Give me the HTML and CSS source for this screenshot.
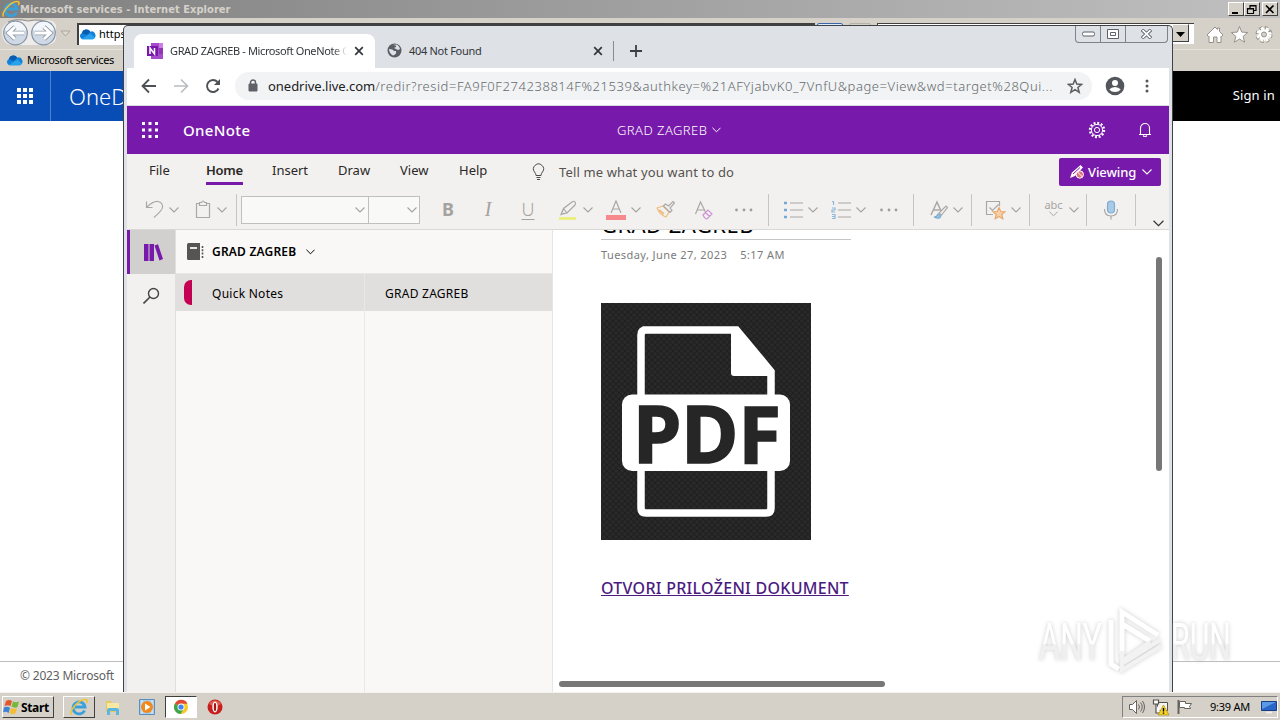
FILE: index.html
```html
<!DOCTYPE html>
<html lang="en">
<head>
    <meta charset="UTF-8">
    <meta name="viewport" content="width=device-width, initial-scale=1.0">
    <title>GRAD ZAGREB - Microsoft OneNote Online</title>
    <link rel="stylesheet" href="styles.css">
</head>
<body>
    <!-- shared icons -->
    <svg class="defs" width="0" height="0">
        <symbol id="chev" viewBox="0 0 10 6"><path d="M.5.5 5 5 9.5.5" fill="none" stroke="currentColor" stroke-width="1.1"/></symbol>
        <symbol id="cloud" viewBox="0 0 18 12"><path d="M3.500 11.500a3.500 3.500 0 0 1-.5-6.500A5 5 0 0 1 12 3.500a4 4 0 0 1 2.500 8z" fill="#1282d8"/><path d="M3 5A5 5 0 0 1 12 3.500L8 7z" fill="#0a5cb0"/><path d="M3 11.200 12 5.500l5 4.500-2 1.500H4z" fill="#27a3ee"/></symbol>
        <symbol id="waffle" viewBox="0 0 16 16"><path d="M0 0h4v4H0zM6 0h4v4H6zM12 0h4v4h-4zM0 6h4v4H0zM6 6h4v4H6zM12 6h4v4h-4zM0 12h4v4H0zM6 12h4v4H6zM12 12h4v4h-4z" fill="#fff"/></symbol>
        <symbol id="dots" viewBox="0 0 20 4"><circle cx="2.500" cy="2" r="1.400"/><circle cx="10" cy="2" r="1.400"/><circle cx="17" cy="2" r="1.400"/></symbol>
        <symbol id="cross" viewBox="0 0 10 10"><path d="m1.200 1.200 7.600 7.600m0-7.600L1.200 8.800" fill="none" stroke="#33363a" stroke-width="1.700"/></symbol>
        <symbol id="ie" viewBox="0 0 18 18"><path d="M14.500 12.500A6 6 0 1 1 15 9H5" fill="none" stroke="#3aa0dc" stroke-width="2.800"/><path d="M1.500 16.500C-1 13 8 1.500 15.500 1.500c2 0 2 2 .8 3.500" fill="none" stroke="#f0c52c" stroke-width="1.500"/></symbol>
    </svg>

    <div class="desktop">
        <div class="ie">
            <div class="ie-title">
                <svg class="ie-logo" width="18" height="18"><use href="#ie"/></svg>
                <span class="ie-name">Microsoft services - Internet Explorer</span>
                <div class="win-btns">
                    <span class="win-btn"><svg width="12" height="11"><path d="M2 9h6" stroke="#000" stroke-width="2"/></svg></span>
                    <span class="win-btn"><svg width="12" height="11"><path d="M4 4V1.500h6v5H8M1.500 4.500h6v5h-6zM1 5h7M4 2h6" fill="none" stroke="#000" stroke-width="1.200"/></svg></span>
                    <span class="win-btn last"><svg width="12" height="11"><path d="m2 1.500 7.500 7.500m0-7.500L2 9" stroke="#000" stroke-width="1.700"/></svg></span>
                </div>
            </div>
            <div class="ie-nav">
                <svg class="ie-arrows" width="75" height="30" viewBox="0 0 75 30">
                    <path d="M14 2h32q8 0 10 5v14q-2 6-10 6H14Q3 27 2 16T14 2z" fill="#eeecea"/>
                    <path d="M8 4Q16 0 28 3q14-3 24 3" fill="none" stroke="#8d8983"/>
                    <g stroke="#8794a5" stroke-width="1.200" fill="#cfd9e6"><circle cx="15.500" cy="15" r="11.800"/><circle cx="43.500" cy="15" r="11.800"/></g>
                    <g fill="#f3f7fb"><path d="M5 12a10.800 10.800 0 0 1 21 0q-10 6-21 0zM33 12a10.800 10.800 0 0 1 21 0q-10 6-21 0z"/></g>
                    <path d="M24 15H9m6-6-6.500 6 6.500 6M35 15h15m-6-6 6.500 6-6.500 6" fill="none" stroke="#929dab" stroke-width="4.500"/>
                    <path d="M24 15H9m6-6-6.500 6 6.500 6M35 15h15m-6-6 6.500 6-6.500 6" fill="none" stroke="#fff" stroke-width="2.800"/>
                    <path d="M61 13h9l-4.500 5z" fill="#dedad2" stroke="#aaa69e"/>
                </svg>
                <div class="address">
                    <svg width="17" height="12"><use href="#cloud"/></svg>
                    <span>https://onedrive.live.com</span>
                </div>
                <span class="nav-chip blue"></span>
                <span class="nav-chip"></span>
                <div class="ie-search"><span class="drop"><svg width="9" height="5"><path d="M0 0h9L4.500 5z"/></svg></span></div>
                <svg class="ie-tools" width="70" height="20" viewBox="0 0 70 20" fill="#fff" stroke="#96928b">
                    <path d="m2 10 8-8 2.500 2.500V3h2v3.500L18 10l-1.500 1.500-.5-.5v6.500h-4V12H8.500v5.500H4V11l-.5.500z"/>
                    <path d="m34.500 1.500 2.200 5.600 6 .4-4.600 3.900 1.500 5.800-5.100-3.200-5.100 3.200 1.500-5.800-4.600-3.900 6-.4z"/>
                    <g transform="translate(59 9.500)"><circle r="6.500" stroke="#96928b" stroke-width="4" stroke-dasharray="2.900 2.200"/><circle r="6.300" fill="none" stroke="#fff" stroke-width="2.600" stroke-dasharray="2.500 2.600" stroke-dashoffset="-.2"/><circle r="5.200" stroke="none"/><circle r="2.500" fill="#d5d0c8"/></g>
                </svg>
            </div>
            <div class="ie-fav">
                <svg width="17" height="12"><use href="#cloud"/></svg>
                <span>Microsoft services</span>
            </div>
            <div class="site-head">
                <div class="site-waffle"><svg width="16" height="16"><use href="#waffle"/></svg></div>
                <div class="site-name">OneDrive</div>
                <div class="site-sign"><span>Sign in</span></div>
            </div>
            <div class="site-body"></div>
            <div class="site-foot"><span>© 2023 Microsoft</span></div>
        </div>

        <div class="taskbar">
            <div class="start">
                <svg width="17" height="16" viewBox="0 0 17 16"><path d="M3 2q3-2 6 0L7.500 7q-3-1.500-6 0z" fill="#e4552a"/><path d="M10 2.500q3 1.500 6 0L14.500 8q-3 1.500-6-.5z" fill="#76b83a"/><path d="M1 8.500q3-1.500 6 .2L5.600 14q-3-2-5.600-.5z" fill="#3d82d4"/><path d="M8 9q3 1.500 6 .2l-1.500 5q-3 1.500-6-.2z" fill="#f5bd32"/></svg>
                <span>Start</span>
            </div>
            <div class="task raised"><svg width="18" height="18"><use href="#ie"/></svg></div>
            <div class="task">
                <svg width="18" height="18" viewBox="0 0 18 18"><path d="M2 3h5l1 2h7v9H2z" fill="#e8c860"/><path d="M3 5h12v8H3z" fill="#f8e8a2"/><path d="M3 17v-5q0-2 2-2h8q2 0 2 2v5h-3v-4H6v4z" fill="#5cb6df"/></svg>
            </div>
            <div class="task">
                <svg width="18" height="18" viewBox="0 0 18 18"><path d="M1.500 1.500h15v15h-15z" fill="#a9cdea" stroke="#5790be"/><path d="M4 2v14M14 2v14" stroke="#e3f1fa"/><circle cx="9" cy="9" r="6" fill="#f18a1c"/><path d="m7 5.500 5.500 3.500L7 12.500z" fill="#fff"/></svg>
            </div>
            <div class="task active">
                <svg width="16" height="16" viewBox="-8 -8 16 16"><circle r="7" fill="#f6c928"/><path d="M0 0-6.100-3.500A7 7 0 0 1 6.500-3.200H0z" fill="#df4935"/><path d="M0 0-6.100-3.500A7 7 0 0 0-.5 7L3 1.500z" fill="#3fa450"/><circle r="3.500" fill="#fff"/><circle r="2.600" fill="#4284ec"/></svg>
            </div>
            <div class="task">
                <svg width="16" height="16" viewBox="0 0 16 16"><circle cx="8" cy="8" r="7.500" fill="#c81e1e"/><path d="M2 5a7 7 0 0 1 12 0q-6 4-12 0z" fill="#e35c50"/><ellipse cx="8" cy="8" rx="2.700" ry="5.400" fill="#fff"/><ellipse cx="8" cy="8" rx="1.200" ry="4.200" fill="#a81313"/></svg>
            </div>
            <div class="tray">
                <svg width="18" height="16" viewBox="0 0 18 16" fill="none" stroke="#66635e"><path d="M1.500 5.500h3l4-4v13l-4-4h-3z" fill="#fff"/><path d="M10.500 5.500q2 2.500 0 5M12.500 3.500q3.500 4.500 0 9M14.500 2q4 6 0 12"/></svg>
                <svg width="18" height="17" viewBox="0 0 18 17"><path d="M5.500 3.500h10v8h-10z" fill="#f6f4ef" stroke="#55524d"/><path d="M1.500 1v4h5V1zM4 5v9h5" fill="#fff" stroke="#55524d" stroke-width="1.200"/><path d="m11.500 6 5.500 10H6z" fill="#f9d321" stroke="#9b800a" stroke-width=".6"/><path d="M11.500 9v3.500m0 1v1.200" stroke="#000" stroke-width="1.400"/></svg>
                <svg width="18" height="16" viewBox="0 0 18 16"><path d="M2.500 1v14" stroke="#66635e" stroke-width="2"/><path d="M3.500 2.500h6v2h6l-2 3 1 2h-6v-1h-5z" fill="#fff" stroke="#66635e"/></svg>
                <span class="clock">9:39 AM</span>
                <svg width="16" height="14" viewBox="0 0 16 14"><path d="M.5 1.500h15v9H.5z" fill="#2a66c8" stroke="#173f86"/><path d="M1 2h14L1 9z" fill="#5c99e7"/><path d="M5 12.500h6" stroke="#eee" stroke-width="2"/></svg>
            </div>
        </div>
    </div>

    <div class="chrome">
        <div class="tabs">
            <div class="tab tab-on">
                <svg width="16" height="16" viewBox="0 0 16 16"><path d="M4 0h12v16H4z" fill="#a74bcd"/><path d="M12 0h4v5h-4z" fill="#cb7ce5"/><path d="M12 5h4v6h-4z" fill="#9236b4"/><path d="M0 3h11v10H0z" fill="#7719aa"/><path d="M3 11V5l4.500 6V5" fill="none" stroke="#fff" stroke-width="1.500"/></svg>
                <span class="tab-text">GRAD ZAGREB - Microsoft OneNote Online</span>
                <svg width="10" height="10"><use href="#cross"/></svg>
            </div>
            <div class="tab tab-off">
                <svg width="15" height="15" viewBox="0 0 15 15"><circle cx="7.500" cy="7.500" r="7" fill="#5b5f65"/><path d="M2 6q4 0 5 2h2q1 3-3 4.500Q2 10 2 6zM6 2q4 0 3 2l-2 1 4 2 2-1q-1-4-4-4.500z" fill="#dee1e6"/></svg>
                <span class="tab-text">404 Not Found</span>
                <svg width="10" height="10"><use href="#cross"/></svg>
            </div>
            <span class="tab-line"></span>
            <svg class="plus" width="12" height="12"><path d="M6 0v12M0 6h12" stroke="#3c4043" stroke-width="1.800"/></svg>
            <div class="aero">
                <span><svg width="13" height="6"><rect x=".5" y="1" width="12" height="4" rx="1.500" fill="#fff" stroke="#5c6069"/></svg></span>
                <span><svg width="12" height="10"><path d="M.5.5h11v9H.5zM3.500 3.500h5v3h-5z" fill="#fff" stroke="#5c6069"/></svg></span>
                <span class="aero-x"><svg width="13" height="10"><path d="m2 .8 9 8.400m0-8.400L2 9.200" stroke="#5c6069" stroke-width="3.600"/><path d="m2.500 1.200 8 7.600m0-7.600-8 7.600" stroke="#fff" stroke-width="1.800"/></svg></span>
            </div>
        </div>

        <div class="toolbar">
            <svg width="16" height="16" viewBox="0 0 16 16"><path d="M15 8H2m6-6.500L1.500 8 8 14.500" fill="none" stroke="#4d5156" stroke-width="1.800"/></svg>
            <svg width="16" height="16" viewBox="0 0 16 16"><path d="M1 8h13M8 1.500 14.500 8 8 14.500" fill="none" stroke="#b9bcbf" stroke-width="1.600"/></svg>
            <svg width="16" height="16" viewBox="0 0 16 16"><path d="M13.500 10.500A6 6 0 1 1 12.500 4" fill="none" stroke="#4d5156" stroke-width="1.900"/><path d="M15 1v6H9z" fill="#4d5156"/></svg>
            <div class="omnibox">
                <svg width="10" height="13" viewBox="0 0 10 13"><path d="M1 5h8v7H1z" fill="#5f6368" stroke="#5f6368"/><path d="M2.500 5V3.500a2.500 2.500 0 0 1 5 0V5" fill="none" stroke="#5f6368" stroke-width="1.500"/></svg>
                <span class="url"><b>onedrive.live.com</b><i>/redir?resid=FA9F0F274238814F%21539&amp;authkey=%21AFYjabvK0_7VnfU&amp;page=View&amp;wd=target%28Qui...</i></span>
                <svg width="16" height="16" viewBox="0 0 16 16"><path d="m8 1.500 1.800 4.600 4.900.3-3.800 3.100 1.300 4.800L8 11.600l-4.200 2.700 1.300-4.800L1.300 6.400l4.900-.3z" fill="none" stroke="#5a5e63" stroke-width="1.500"/></svg>
            </div>
            <svg width="20" height="20" viewBox="0 0 20 20"><circle cx="10" cy="10" r="9.300" fill="#53575c"/><circle cx="10" cy="7" r="3" fill="#fff"/><path d="M4.300 13.500q2-2.500 5.700-2.500t5.700 2.500q-2 2.500-5.700 2.500t-5.700-2.500z" fill="#fff"/></svg>
            <svg class="kebab" width="4" height="16" viewBox="0 0 4 16" fill="#53575c"><circle cx="2" cy="3" r="1.500"/><circle cx="2" cy="8" r="1.500"/><circle cx="2" cy="13" r="1.500"/></svg>
        </div>

        <div class="page">
            <div class="suite">
                <svg width="16" height="16" viewBox="0 0 16 16" fill="#fff"><path d="M0 0h3v3H0zM6.500 0h3v3h-3zM13 0h3v3h-3zM0 6.500h3v3H0zM6.500 6.500h3v3h-3zM13 6.500h3v3h-3zM0 13h3v3H0zM6.500 13h3v3h-3zM13 13h3v3h-3z"/></svg>
                <span class="app">OneNote</span>
                <span class="doc">GRAD ZAGREB</span>
                <svg width="9" height="6"><use href="#chev"/></svg>
                <svg class="gear" width="18" height="18" viewBox="-9 -9 18 18" fill="none" stroke="#fff"><circle r="2.600"/><circle r="5.600"/><circle r="7" stroke-width="2.400" stroke-dasharray="1.900 1.770"/></svg>
                <svg width="14" height="16" viewBox="0 0 14 16" fill="none" stroke="#fff" stroke-width="1.100"><path d="M2.500 12.500V6a4.500 4.500 0 0 1 9 0v6.500H13H1zM5 13.500q2 2 4 0"/></svg>
            </div>

            <div class="menu">
                <span>File</span>
                <span class="on">Home</span>
                <span>Insert</span>
                <span>Draw</span>
                <span>View</span>
                <span>Help</span>
                <svg width="13" height="18" viewBox="0 0 13 18" fill="none" stroke="#4b4947"><path d="M4 12.500Q4 10.500 2.500 9a5 5 0 1 1 8 0Q9 10.500 9 12.500zM4.500 14.500h4M5 16.500h3"/></svg>
                <span class="tell">Tell me what you want to do</span>
                <div class="viewing">
                    <svg width="16" height="16" viewBox="0 0 16 16"><path d="m1 14 2-5.500L11.500 1 14 3.500 6 12z" fill="#fff"/><path d="m4 10 7-6.500" stroke="#7719aa"/><circle cx="10.800" cy="10.500" r="3.700" fill="#e0747c" stroke="#fff"/><path d="m8.500 8 5 5" stroke="#fff"/></svg>
                    <span>Viewing</span>
                    <svg width="10" height="6"><use href="#chev"/></svg>
                </div>
            </div>

            <div class="ribbon">
                <svg width="19" height="19" viewBox="0 0 19 19"><path d="M1.500 1.500v6h6M1.500 7.500Q8 1 13 1.500q5 1 4.500 6-.5 3-8.500 10" /></svg>
                <svg width="10" height="6"><use href="#chev"/></svg>
                <svg width="16" height="19" viewBox="0 0 16 19"><path d="M4.500 3.500h-3v14h13v-14h-3M4.500 5.500v-3h2q1.500-3 3 0h2v3z"/></svg>
                <svg width="10" height="6"><use href="#chev"/></svg>
                <i class="sep"></i>
                <div class="select"><svg width="10" height="6"><use href="#chev"/></svg></div>
                <div class="select size"><svg width="10" height="6"><use href="#chev"/></svg></div>
                <span class="fmt bold">B</span>
                <span class="fmt ital">I</span>
                <span class="fmt under">U</span>
                <svg width="20" height="20" viewBox="0 0 20 20"><path d="M1 18.500h17" stroke="#e9ee6c" stroke-width="2.500"/><path d="m3 14.500 2.500-6L14 2q2-1.500 3 0t0 3L9 13l-6 1.500zM5.500 8.500 9 13m-3.500-4L3 14.500 7 13" /></svg>
                <svg width="10" height="6"><use href="#chev"/></svg>
                <svg width="20" height="20" viewBox="0 0 20 20"><path d="M0 17.500h20" stroke="#f5898c" stroke-width="5"/><path d="m5 13 5-12 5 12M7 9h6" /></svg>
                <svg width="10" height="6"><use href="#chev"/></svg>
                <svg width="19" height="19" viewBox="0 0 19 19"><path d="m1 8 6-2 6 6-3 5q-6-2-9-9z" stroke="#edbd80"/><path d="m3 10 5 4" stroke="#edbd80" stroke-width="2"/><path d="m7.500 6 2-2 3 2L17 1.500l1.500 1.500L14 8l2 2.500-2 2z" /></svg>
                <svg width="20" height="20" viewBox="0 0 20 20"><path d="m1.500 14 5-12 5 10M3 10h7" /><path d="m9 15 5-5 4 4-5 5q-2 0-4-4zM11.500 12.500l4 4" stroke="#cf93d5"/></svg>
                <svg class="more" width="20" height="4"><use href="#dots"/></svg>
                <i class="sep"></i>
                <svg width="20" height="19" viewBox="0 0 20 19"><path d="M7 3h13M7 10h13M7 17h13" /><path d="M1 3h3M1 10h3M1 17h3" stroke="#75a8d2" stroke-width="2.500"/></svg>
                <svg width="10" height="6"><use href="#chev"/></svg>
                <svg width="20" height="19" viewBox="0 0 20 19"><path d="M7 3h13M7 10h13M7 17h13" /><path d="M1 1.500h1.500V5M1 8h3v2H1v2h3M1 14.500h3v4H1m0-2h3" stroke="#8fb8d9"/></svg>
                <svg width="10" height="6"><use href="#chev"/></svg>
                <svg class="more" width="20" height="4"><use href="#dots"/></svg>
                <i class="sep"></i>
                <svg width="20" height="20" viewBox="0 0 20 20"><path d="M2 15 8 2l4 9M4.500 10h6" stroke-width="1.500"/><path d="m10 13 7-7 1.500 1.500-6 7.500z"/><path d="M5 17q3 0 4-3l3 1.500Q11 20 5 17z" fill="#9cc4e4" stroke="#7dacd1"/></svg>
                <svg width="10" height="6"><use href="#chev"/></svg>
                <i class="sep"></i>
                <svg width="21" height="20" viewBox="0 0 21 20"><path d="M8 14.500H1.500v-13h13V6M4.500 7.500l3 3 6-6" /><path d="m14 7.500 1.700 4 4.300.3-3.300 2.700 1.100 4.200-3.800-2.300-3.800 2.300 1.100-4.200L8 11.800l4.300-.3z" fill="#fad0a9" stroke="#e8a86c"/></svg>
                <svg width="10" height="6"><use href="#chev"/></svg>
                <i class="sep"></i>
                <span class="abc">abc<svg width="9" height="6"><use href="#chev"/></svg></span>
                <svg width="10" height="6"><use href="#chev"/></svg>
                <i class="sep"></i>
                <svg width="18" height="20" viewBox="0 0 18 20"><rect x="5.500" y="1" width="7" height="12" rx="3.500" fill="#a9cae6" stroke="#7fadd2"/><path d="M2.500 9q0 7 6.500 7t6.500-7M9 16v3.500" /></svg>
                <i class="sep"></i>
                <svg class="fold" width="11" height="7"><use href="#chev"/></svg>
            </div>

            <div class="work">
                <div class="rail">
                    <div class="rail-on"><svg width="19" height="17" viewBox="0 0 19 17" fill="#7719aa"><path d="M0 0h4.500v17H0zM5.500 0H10v17H5.500zM10.500 1.500l3.500-1.300L19 15l-3.500 1.500z"/></svg></div>
                    <div class="rail-find"><svg width="17" height="17" viewBox="0 0 17 17"><circle cx="10.500" cy="6.500" r="5" fill="none" stroke="#444" stroke-width="1.400"/><path d="m7 10-6.500 6.500" stroke="#444" stroke-width="1.600"/></svg></div>
                </div>
                <div class="nav">
                    <div class="book">
                        <svg width="17" height="17" viewBox="0 0 17 17"><path d="M0 1.500Q0 0 1.500 0H13v17H1.500Q0 17 0 15.500z" fill="#575553"/><path d="M3 5h7" stroke="#faf8f6" stroke-width="1.800"/><path d="M15.500 3v12" stroke="#575553" stroke-width="1.600" stroke-dasharray="2 1.300"/></svg>
                        <span>GRAD ZAGREB</span>
                        <svg width="9" height="6"><use href="#chev"/></svg>
                    </div>
                    <div class="lists">
                        <div class="list sections">
                            <div class="row"><i class="flag"></i><span>Quick Notes</span></div>
                        </div>
                        <div class="list">
                            <div class="row"><span>GRAD ZAGREB</span></div>
                        </div>
                    </div>
                </div>
                <div class="note">
                    <div class="note-title"><span>GRAD ZAGREB</span></div>
                    <div class="date"><span>Tuesday, June 27, 2023</span><span>5:17 AM</span></div>
                    <svg class="pdf" width="210" height="237" viewBox="0 0 210 237">
                        <defs>
                            <pattern id="weave" width="6" height="6" patternUnits="userSpaceOnUse">
                                <path d="M0 0h6v6H0z" fill="#2a2a2a"/>
                                <path d="m0 0 6 6M6 0 0 6" stroke="#1f1f1f" stroke-width="1.200"/>
                            </pattern>
                        </defs>
                        <path d="M0 0h210v237H0z" fill="url(#weave)"/>
                        <path d="M41.500 27h94L170 68.500V205q0 5-5 5H45q-5 0-5-5V32q0-5 5-5z" fill="none" stroke="#fff" stroke-width="7.500"/>
                        <path d="M130 27h7l35 41v5h-39q-3 0-3-3z" fill="#fff"/>
                        <rect x="21" y="91.500" width="168" height="76.500" rx="10" fill="#fff"/>
                        <text class="pdf-text" x="32" y="159.500" textLength="148" lengthAdjust="spacingAndGlyphs">PDF</text>
                    </svg>
                    <a class="link" href="#">OTVORI PRILOŽENI DOKUMENT</a>
                    <div class="hbar"></div>
                </div>
                <div class="vtrack"><div class="vbar"></div></div>
            </div>
        </div>
    </div>

    <svg class="mark" width="210" height="80" viewBox="0 0 210 80">
        <defs>
            <linearGradient id="fade" gradientUnits="userSpaceOnUse" x1="0" y1="18" x2="0" y2="60">
                <stop offset=".5" stop-color="#fff"/>
                <stop offset=".55" stop-color="#ececec"/>
            </linearGradient>
        </defs>
        <text x="7" y="56" textLength="63" lengthAdjust="spacingAndGlyphs">ANY</text>
        <text x="139" y="56" textLength="60" lengthAdjust="spacingAndGlyphs">RUN</text>
        <path d="M79 16v44l8 5M90 50V8l36 23M90 20l28 17" fill="none" stroke="#fff" stroke-width="5"/>
        <path d="M128 36 90 60v6l39-24M90 47v10l28-19" fill="none" stroke="#eee" stroke-width="4"/>
    </svg>
</body>
</html>
```
FILE: styles.css
```css
* {
    box-sizing: border-box;
}

body {
    margin: 0;
    width: 1280px;
    height: 720px;
    overflow: hidden;
    position: relative;
    background: #fff;
    font-family: "Noto Sans", "Open Sans", sans-serif;
    color: #222;
}

svg {
    display: block;
    flex: none;
}

span {
    white-space: nowrap;
}

.defs {
    position: absolute;
}

.desktop {
    display: flex;
    flex-direction: column;
    height: 720px;
}

/* Internet Explorer window behind */
.ie {
    flex: 1;
    display: flex;
    flex-direction: column;
}

.ie-title {
    height: 18px;
    display: flex;
    align-items: center;
    padding: 0 2px;
    background: linear-gradient(90deg, #808080, #c0c0c0);
    color: #d5d1c9;
}

.ie-name {
    font: bold 11px "DejaVu Sans Condensed", "DejaVu Sans", sans-serif;
    font-stretch: condensed;
    letter-spacing: 0.05px;
    flex: 1;
}

.win-btns {
    display: flex;
}

.win-btn {
    width: 16px;
    height: 14px;
    padding: 1px;
    background: #d5d1c9;
    border: 1px solid;
    border-color: #fff #404040 #404040 #fff;
}

.win-btn.last {
    margin-left: 2px;
}

.ie-nav {
    height: 31px;
    display: flex;
    background: #d5d0c8;
}

.address {
    width: 738px;
    height: 22px;
    margin: 5px 2px 0 2px;
    padding: 0 0 3px 0;
    display: flex;
    align-items: center;
    gap: 3px;
    background: #fff;
    border: 1px solid #404040;
    border-width: 2px 0 0 2px;
    font-size: 11px;
    color: #000;
}

.nav-chip {
    width: 22px;
    height: 20px;
    margin: 5px 6px 0 0;
    border: 1px solid #b5b1a9;
    border-radius: 2px;
}

.nav-chip.blue {
    width: 26px;
    background: #dcebfa;
    border-color: #3c66a8;
}

.ie-search {
    width: 317px;
    height: 21px;
    margin-top: 5px;
    display: flex;
    justify-content: flex-end;
    background: #fff;
    border: 1px solid #404040;
    border-bottom-color: #fff;
    border-right: 0;
    padding-right: 5px;
}

.drop {
    width: 17px;
    height: 18px;
    padding: 7px 3px;
    background: #d5d0c8;
    border: 1px solid #fff;
    border-right-color: #404040;
    border-bottom-color: #404040;
}

.ie-tools {
    margin: 7px 0 0 11px;
}

.ie-fav {
    height: 22px;
    padding: 0 0 2px 6px;
    display: flex;
    align-items: center;
    gap: 4px;
    background: #d5d0c8;
    border-top: 1px solid #e6e2dc;
    font-size: 11px;
    letter-spacing: -0.32px;
    color: #000;
}

.site-head {
    height: 50px;
    display: flex;
    align-items: center;
    background: #000;
    color: #fff;
}

.site-waffle {
    width: 51px;
    height: 50px;
    padding: 17px;
    background: #084db5;
    border-right: 1px solid #4b80cd;
}

.site-name {
    width: 200px;
    height: 50px;
    padding-left: 18px;
    background: #084db5;
    font-size: 22px;
    font-weight: 300;
    line-height: 51px;
}

.site-sign {
    flex: 1;
    display: flex;
    justify-content: flex-end;
    padding: 0 5px 2px 0;
    font-size: 13px;
    letter-spacing: 0.15px;
}

.site-body {
    flex: 1;
    background: #fff;
}

.site-foot {
    height: 31px;
    padding: 5px 0 0 20px;
    border-top: 1px solid #bdbdbd;
    font-size: 12px;
    letter-spacing: -0.18px;
    color: #606060;
}

/* taskbar */
.taskbar {
    height: 28px;
    display: flex;
    align-items: center;
    padding: 1px 2px 0 2px;
    background: #d5d0c8;
    border-top: 1px solid #f4f2ee;
}

.start {
    width: 52px;
    height: 22px;
    display: flex;
    align-items: center;
    gap: 1px;
    padding-left: 0;
    border: 1px solid;
    border-color: #fff #404040 #404040 #fff;
    font: bold 12px "Noto Sans", sans-serif;
    letter-spacing: -0.35px;
    color: #000;
    margin-right: 9px;
}

.task {
    width: 32px;
    height: 22px;
    margin-right: 2px;
    display: flex;
    align-items: center;
    justify-content: center;
    border: 1px solid transparent;
}

.task.raised {
    border-color: #fff #404040 #404040 #fff;
}

.task.active {
    background: #fff;
    border-color: #404040 #fff #fff #404040;
}

.tray {
    width: 156px;
    height: 22px;
    margin-left: auto;
    display: flex;
    align-items: center;
    gap: 6px;
    padding-left: 5px;
    border: 1px solid;
    border-color: #808080 #fff #fff #808080;
    font-size: 11px;
    color: #000;
}

.clock {
    width: 44px;
    margin: -1px 3px 0 10px;
    letter-spacing: -0.25px;
}

/* Chrome window lying over the desktop */
.chrome {
    position: absolute;
    left: 123px;
    top: 25px;
    width: 1050px;
    height: 667px;
    padding: 0 3px;
    background: #dee1e6;
    border: 1px solid #404247;
    border-bottom: 0;
    border-radius: 5px 5px 0 0;
    display: flex;
    flex-direction: column;
}

.tabs {
    height: 42px;
    display: flex;
    align-items: flex-end;
}

.tab {
    height: 34px;
    display: flex;
    align-items: center;
    padding-bottom: 1px;
    font-size: 11px;
    color: #33363a;
}

.tab-on {
    width: 241px;
    margin-left: 7px;
    padding-left: 13px;
    gap: 7px;
    background: #fff;
    border-radius: 8px 8px 0 0;
}

.tab-on .tab-text {
    width: 177px;
    overflow: hidden;
    letter-spacing: -0.38px;
    mask-image: linear-gradient(90deg, #000 92%, transparent);
}

.tab-off {
    width: 237px;
    padding-left: 12px;
    gap: 7px;
}

.tab-off .tab-text {
    width: 177px;
    letter-spacing: -0.3px;
}

.tab-line {
    width: 1px;
    height: 20px;
    margin: 0 16px 7px 1px;
    background: #888c92;
}

.plus {
    margin-bottom: 11px;
}

.aero {
    align-self: flex-start;
    margin-left: auto;
    margin-right: 1px;
    height: 17px;
    display: flex;
    border: 1px solid #7d828c;
    border-top: 0;
    border-radius: 0 0 4px 4px;
}

.aero span {
    width: 25px;
    display: flex;
    align-items: center;
    justify-content: center;
    border-right: 1px solid #7d828c;
}

.aero .aero-x {
    width: 41px;
    border-right: 0;
}

.toolbar {
    height: 38px;
    display: flex;
    align-items: center;
    gap: 16px;
    padding: 0 18px 2px 14px;
    background: #fff;
    border-bottom: 1px solid #dcdcdc;
}

.omnibox {
    width: 857px;
    height: 28px;
    margin-left: -2px;
    margin-right: -3px;
    padding: 0 9px 0 13px;
    display: flex;
    align-items: center;
    border-radius: 14px;
    background: #f1f3f4;
}

.url {
    flex: 1;
    padding-left: 10px;
    font-size: 13px;
    color: #65696e;
}

.url b {
    font-weight: 400;
    color: #202124;
    letter-spacing: -0.03px;
}

.url i {
    font-style: normal;
    font-weight: 300;
    letter-spacing: 0.56px;
}

.toolbar .kebab {
    margin-left: 4px;
}

/* OneNote */
.page {
    flex: 1;
    display: flex;
    flex-direction: column;
    background: #f3f1ef;
    min-height: 0;
}

.suite {
    height: 48px;
    display: flex;
    align-items: center;
    padding: 0 17px 0 15px;
    background: #7719aa;
    color: #fff;
}

.app {
    width: 458px;
    padding-left: 25px;
    font-size: 15px;
    font-weight: 500;
    letter-spacing: 0.35px;
}

.doc {
    width: 95px;
    margin-left: 1px;
    font-size: 13px;
    font-weight: 300;
    letter-spacing: 0.45px;
}

.gear {
    margin-left: auto;
    margin-right: 32px;
}

.menu {
    height: 36px;
    display: grid;
    grid-template-columns: 57px 66px 66px 62px 59px 73px 27px 500px 102px;
    align-items: center;
    padding-left: 22px;
    font-size: 13px;
    color: #292827;
}

.menu > span {
    height: 30px;
    line-height: 27px;
}

.menu .on {
    justify-self: start;
    height: 28px;
    margin-bottom: 2px;
    font-weight: 600;
    letter-spacing: -0.3px;
    border-bottom: 3px solid #7719aa;
}

.menu .tell {
    line-height: 30px;
    letter-spacing: 0.13px;
    color: #55524f;
}

.viewing {
    height: 28px;
    display: flex;
    align-items: center;
    gap: 3px;
    padding-left: 10px;
    border-radius: 2px;
    background: #7719aa;
    color: #fff;
    font-weight: 500;
}

.viewing span {
    width: 51px;
    letter-spacing: -0.1px;
}

.ribbon {
    height: 40px;
    display: grid;
    grid-template-columns: 24px 26px 22px 19px 5px 127px 72px 38px 40px 40px 25px 23px 25px 25px 38px 40px 34px 15px 25px 23px 25px 23px 34px 16px 24px 18px 14px 26px 18px 15px 25px 17px 16px 33px 18px 16px;
    align-items: center;
    padding-left: 18px;
    border-bottom: 1px solid #dad8d6;
    color: #a5a3a1;
}

.ribbon > svg {
    fill: none;
    stroke: #aaa8a6;
    stroke-width: 1.2;
}

.ribbon > .more {
    fill: #a09e9c;
    stroke: none;
}

.ribbon > .fold {
    color: #333;
    margin-top: 27px;
}

.sep {
    width: 1px;
    height: 32px;
    background: #c7c5c3;
}

.select {
    width: 128px;
    height: 28px;
    display: flex;
    align-items: center;
    justify-content: flex-end;
    padding-right: 3px;
    background: #f9f9f7;
    border: 1px solid #c2c0be;
}

.select.size {
    width: 52px;
    padding-right: 2px;
}

.fmt {
    width: 20px;
    font-size: 18px;
    line-height: 20px;
    text-align: center;
    margin-top: -2px;
}

.bold {
    font-weight: 700;
    width: 16px;
}

.ital {
    font-family: "Liberation Serif", serif;
    font-style: italic;
    font-size: 20px;
}

.under {
    font-weight: 300;
    text-decoration: underline;
    text-underline-offset: 3px;
}

.abc {
    display: flex;
    flex-direction: column;
    align-items: center;
    width: 19px;
    margin-top: -4px;
    font-size: 11px;
    line-height: 12px;
}

.work {
    flex: 1;
    display: flex;
    min-height: 0;
}

.rail {
    width: 49px;
    background: #f3f1ef;
    border-right: 1px solid #e1dfdd;
}

.rail-on {
    width: 48px;
    height: 44px;
    padding: 14px 0 0 14px;
    border-left: 3px solid #7719aa;
    background: #d2d0ce;
}

.rail-find {
    padding: 13px 0 0 16px;
}

.nav {
    width: 377px;
    display: flex;
    flex-direction: column;
    background: #faf8f6;
    border-right: 1px solid #e8e6e4;
    font-size: 12px;
    color: #000;
}

.book {
    height: 44px;
    display: flex;
    align-items: center;
    padding-left: 11px;
    gap: 8px;
    border-bottom: 1px solid #eae8e6;
}

.book span {
    width: 86px;
    font-weight: 600;
    letter-spacing: 0.2px;
}

.lists {
    flex: 1;
    display: flex;
}

.list {
    flex: 1;
}

.sections {
    flex: none;
    width: 189px;
    border-right: 1px solid #eae8e6;
}

.row {
    height: 37px;
    display: flex;
    align-items: center;
    padding-left: 20px;
    background: #e1dfdd;
    letter-spacing: 0.26px;
}

.row span {
    padding-top: 2px;
}

.sections .row {
    padding-left: 8px;
    gap: 20px;
}

.flag {
    width: 8px;
    height: 25px;
    background: #c30052;
    border-radius: 7px 0 0 7px;
}

.note {
    flex: 1;
    display: flex;
    flex-direction: column;
    align-items: flex-start;
    padding-left: 48px;
    background: #fff;
    overflow: hidden;
}

/* the title is scrolled almost fully under the ribbon */
.note-title {
    width: 250px;
    height: 10px;
    display: flex;
    align-items: flex-end;
    overflow: hidden;
    padding-bottom: 4px;
    border-bottom: 1px solid #c6c6c6;
    font-size: 22px;
    line-height: 22px;
    letter-spacing: 0.45px;
    color: #000;
}

.date {
    display: flex;
    gap: 13px;
    height: 30px;
    line-height: 30px;
    font-size: 11px;
    letter-spacing: 0.42px;
    color: #7b7b7b;
}

.pdf {
    margin-top: 33px;
}

.pdf-text {
    font: bold 79px "Noto Sans", sans-serif;
    fill: #262626;
    stroke: #262626;
    stroke-width: 1.5;
}

.link {
    margin-top: 35px;
    font-size: 16px;
    line-height: 26px;
    font-weight: 500;
    letter-spacing: 0.28px;
    color: #4b1a80;
}

.hbar {
    width: 326px;
    height: 6px;
    margin: auto 0 5px -42px;
    border-radius: 3px;
    background: #777;
}

.vtrack {
    width: 13px;
    padding-top: 27px;
    background: #fff;
}

.vbar {
    width: 6px;
    height: 214px;
    border-radius: 3px;
    background: #777;
}

/* recorder watermark on top of everything */
.mark {
    position: absolute;
    left: 1032px;
    top: 604px;
    opacity: 0.75;
    filter: drop-shadow(0 0 2px #bbb);
}

.mark text {
    font: 400 51px Roboto, sans-serif;
    fill: url(#fade);
}
```
